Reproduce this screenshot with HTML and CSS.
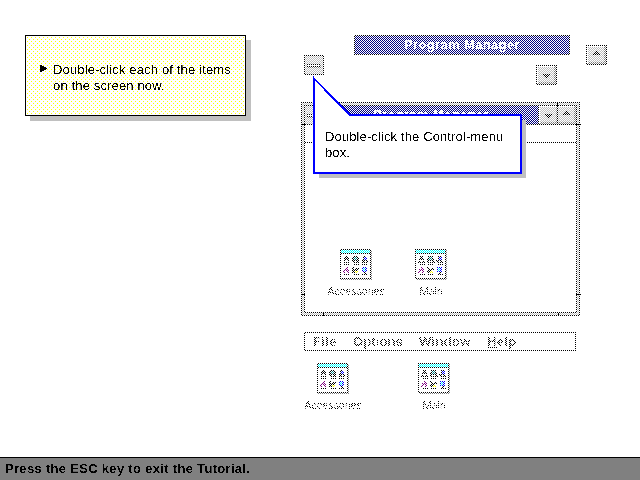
FILE: index.html
```
<!DOCTYPE html>
<html lang="en">
<head>
<meta charset="utf-8">
<title>Tutorial</title>
<link rel="stylesheet" href="styles.css">
</head>
<body>
<svg class="defs" aria-hidden="true">
  <filter id="crisp" x="0" y="0" width="1" height="1" color-interpolation-filters="sRGB">
    <feComponentTransfer><feFuncA type="linear" slope="8" intercept="-3.7"/></feComponentTransfer>
  </filter>
  <symbol id="minus" viewBox="0 0 18 18">
    <path fill="#808080" d="M3 9h13v3H3z"/><path d="M2 8h13v3H2z"/><path fill="#fff" d="M3 9h11v1H3z"/>
  </symbol>
  <symbol id="up" viewBox="0 0 19 18">
    <path fill="#fff" d="M0 0h18v1H1v16H0z"/><path fill="#808080" d="M18 0h1v18H1v-1h1v-1h15V1h1z"/>
    <path d="M9 5h1v1h1v1h1v1h1v1H6V8h1V7h1V6h1z"/>
  </symbol>
  <symbol id="down" viewBox="0 0 19 18">
    <path fill="#fff" d="M0 0h18v1H1v16H0z"/><path fill="#808080" d="M18 0h1v18H1v-1h1v-1h15V1h1z"/>
    <path d="M6 8h7v1h-1v1h-1v1h-1v1H9v-1H8v-1H7V9H6z"/>
  </symbol>
  <symbol id="group" viewBox="0 0 32 31">
    <path fill="#808080" d="M1 1h31v30H1z"/>
    <path d="M0 0h31v30H0z"/>
    <path fill="#fff" d="M1 1h29v28H1z"/>
    <path fill="#0ff" d="M1 1h29v3H1z"/>
    <path d="M1 4h29v1H1z"/>
    <path d="M5 7h3v2h1v4h1v1H3v-1h1V9h1zM13 7h5v2h1v4h1v1h-7v-1h-1V9h1zM23 7h3v2h1v3h1v2h-6v-2h-1v-1h2z"/>
    <path d="M4 15h6v1H4zM13 15h6v1h-6zM22 15h6v1h-6z"/>
    <path fill="#fff" d="M5 11h3v2H5zM14 12h3v1h-3zM24 12h2v1h-2z"/>
    <path fill="#008080" d="M14 8h3v3h-3z"/><path fill="#0000ff" d="M24 8h3v3h-3z"/>
    <path fill="#800080" d="M6 18h2v2h1v4H7v-2H5v2H3v-2h1v-2h2z"/>
    <path d="M4 25h6v1H4zM12 18h2v2h2v-1h3v2h-2v2h-2v1h-3v-3h1zM13 25h6v1h-6zM22 25h6v1h-6z"/>
    <path fill="#ffff00" d="M15 22h3v2h-3z"/>
    <path fill="#0000ff" d="M22 18h5v5h-5z"/><path fill="#00ffff" d="M23 19h2v3h-2z"/><path d="M24 23h2v2h-2z"/>
  </symbol>
</svg>

<main class="desktop">
  <div class="piece button control-box"><svg width="18" height="18"><use href="#minus"/></svg></div>
  <div class="piece button minimize"><svg width="19" height="18"><use href="#down"/></svg></div>
  <div class="piece button maximize"><svg width="19" height="18"><use href="#up"/></svg></div>

  <section class="piece window">
    <div class="frame">
      <header class="titlebar">
        <span class="cell"><svg width="18" height="18"><use href="#minus"/></svg></span>
        <span class="caption txt">Program Manager</span>
        <span class="cell right"><svg width="19" height="18"><use href="#down"/></svg></span>
        <span class="cell right last"><svg width="19" height="18"><use href="#up"/></svg></span>
      </header>
      <div class="menu-blank"></div>
    </div>
  </section>

  <nav class="piece menubar"><span class="txt file">File</span><span class="txt options">Options</span><span class="txt win">Window</span><span class="txt help"><u>H</u>elp</span></nav>

  <figure class="piece group loose-acc"><svg width="32" height="31"><use href="#group"/></svg><figcaption class="txt">Accessories</figcaption></figure>
  <figure class="piece group loose-main"><svg width="32" height="31"><use href="#group"/></svg><figcaption class="txt">Main</figcaption></figure>

  <div class="dither"></div>

  <div class="piece title-strip grain"><span class="txt">Program Manager</span></div>
  <div class="piece groups grain">
    <figure class="group"><svg width="32" height="31"><use href="#group"/></svg><figcaption class="txt">Accessories</figcaption></figure>
    <figure class="group"><svg width="32" height="31"><use href="#group"/></svg><figcaption class="txt">Main</figcaption></figure>
  </div>

  <svg class="ticks" width="280" height="215" viewBox="0 0 280 215"><path d="M0 22h4v1H0zM275 22h5v1h-5zM0 192h4v1H0zM275 192h5v1h-5zM256 0h1v4h-1zM22 211h1v3h-1zM257 211h1v3h-1z"/></svg>

  <aside class="panel">
    <svg class="bullet" width="7" height="7" viewBox="0 0 7 7"><path d="M0 0h2v1h2v1h2v1h1v1H6v1H4v1H2v1H0z"/></svg>
    <p class="txt">Double-click each of the items<br>on the screen now.</p>
  </aside>

  <aside class="callout">
    <svg class="balloon" width="213" height="102" viewBox="0 0 213 102">
      <path fill="#c0c0c0" d="M6 44h207v58H6z"/>
      <path fill="#fff" stroke="#00f" stroke-width="2" d="M1 2.4V97h207V39H37z"/>
    </svg>
    <p class="txt">Double-click the Control-menu<br>box.</p>
  </aside>
</main>
<footer class="status"><span class="txt">Press the ESC key to exit the Tutorial.</span></footer>
</body>
</html>
```
FILE: styles.css
```
* { box-sizing: border-box; }
body {
  margin: 0;
  width: 640px;
  height: 480px;
  display: flex;
  flex-direction: column;
  overflow: hidden;
  background: #fff;
  color: #000;
  font: 13px/16px "Liberation Sans", Arial, sans-serif;
}
svg { display: block; shape-rendering: crispEdges; }
p, figure { margin: 0; }
.defs { position: absolute; width: 0; height: 0; }
.txt { filter: url(#crisp); white-space: nowrap; }

.desktop { position: relative; flex: 1; }
.piece { position: absolute; }

.dither, .grain::after {
  content: "";
  position: absolute;
  inset: 0;
  background: repeating-conic-gradient(transparent 0 25%, #fff 0 50%) 0 0 / 2px 2px;
}
.dither { left: 300px; }

.title-strip {
  left: 354px; top: 35px; width: 216px; height: 20px;
  border: 1px solid #000;
  background: #000080;
  color: #fff;
  font-weight: bold;
  letter-spacing: 0.35px;
  line-height: 18px;
  text-align: center;
}
.title-strip::after { inset: -1px; }
.title-strip .txt { display: block; }

.button { border: 1px solid #000; background: #c0c0c0; }
.control-box { left: 304px; top: 55px; width: 20px; height: 20px; }
.minimize { left: 536px; top: 65px; width: 21px; height: 20px; }
.maximize { left: 586px; top: 45px; width: 21px; height: 20px; }

.window {
  left: 301px; top: 102px; width: 279px; height: 214px;
  border: 1px solid #000;
  padding: 2px;
  background: #c0c0c0;
}
.frame { height: 100%; border: 1px solid #000; background: #fff; }
.titlebar { display: flex; height: 19px; background: #000080; border-bottom: 1px solid #000; }
.cell { flex: none; width: 19px; overflow: hidden; background: #c0c0c0; border-right: 1px solid #000; }
.cell.right { border-right: 0; border-left: 1px solid #000; }
.cell.last svg { margin-left: -1px; }
.caption {
  flex: 1;
  color: #fff;
  font-weight: bold;
  letter-spacing: 0.35px;
  line-height: 18px;
  padding-left: 49px;
}
.menu-blank { height: 18px; border-bottom: 1px solid #000; }

.groups { left: 326px; top: 249px; height: 49px; display: flex; gap: 15px; }
.group { width: 60px; display: flex; flex-direction: column; align-items: center; }
.group figcaption { font-size: 11px; line-height: 14px; margin-top: 4px; letter-spacing: -0.15px; }
.loose-acc { left: 303px; top: 363px; }
.loose-main { left: 404px; top: 363px; }

.menubar {
  left: 304px; top: 332px; width: 272px; height: 19px;
  border: 1px solid #000;
  display: flex;
  padding-left: 8px;
  font-weight: bold;
  letter-spacing: 0.35px;
  line-height: 18px;
}
.file { width: 40px; }
.options { width: 66px; letter-spacing: 0.1px; }
.win { width: 68px; }

.ticks { position: absolute; left: 301px; top: 102px; }

.panel {
  position: absolute;
  left: 25px; top: 35px; width: 221px; height: 81px;
  display: flex;
  padding: 26px 0 0 14px;
  border: 1px solid #000;
  background: #fff url("data:image/svg+xml,%3Csvg xmlns='http://www.w3.org/2000/svg' width='4' height='4' viewBox='0 0 4 4' shape-rendering='crispEdges'%3E%3Cpath fill='%23ff0' d='M1 1h1v1H1zM3 3h1v1H3z'/%3E%3C/svg%3E");
  box-shadow: 5px 5px 0 #c0c0c0;
  letter-spacing: 0.15px;
}
.bullet { margin: 3px 6px 0 0; }

.callout { position: absolute; left: 313px; top: 76px; width: 213px; height: 102px; padding: 53px 0 0 12px; letter-spacing: 0.12px; }
.balloon { position: absolute; left: 0; top: 0; }
.callout .txt { position: relative; }

.status {
  height: 23px;
  border-top: 1px solid #000;
  background: #808080;
  padding: 3px 0 0 5px;
  font-weight: bold;
  letter-spacing: 0.31px;
}
.status .txt { display: block; }
```
